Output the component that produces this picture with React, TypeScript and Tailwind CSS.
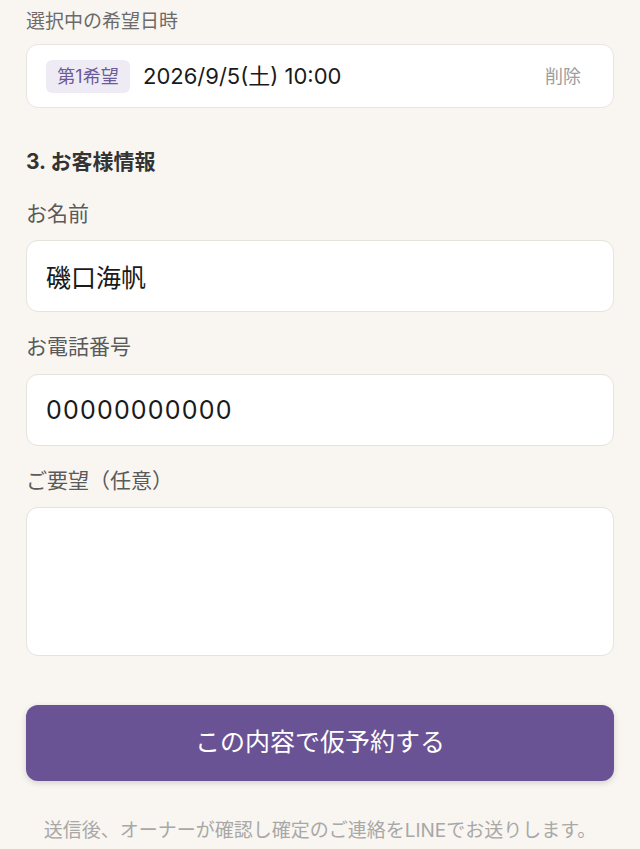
import { useState } from "react";

const font = { fontFamily: 'Inter, "Noto Sans CJK JP", sans-serif' };

function Label({ children }: { children: React.ReactNode }) {
    return <p className="text-[21px] leading-[26px] text-[#5a5a5a]">{children}</p>
}

export default function App() {
    const [name, setName] = useState("磯口海帆")
    const [tel, setTel] = useState("00000000000")
    const [note, setNote] = useState("")

    return (
        <div style={font} className="min-h-[849px] bg-[#f9f6f1] px-[26px] pt-[10px] pb-6">
            <p className="text-[19px] leading-[24px] text-[#6b6b6b]">選択中の希望日時</p>
            <div className="mt-[10px] h-[64px] flex items-center bg-white border border-[#e8e4de] rounded-[12px] pl-[19px] pr-[32px]">
                <span className="h-[33px] w-[84px] flex items-center justify-center rounded-[6px] bg-[#efebf5] text-[#6c5b98] text-[18px]">第1希望</span>
                <span className="ml-[13px] text-[22px] text-[#1a1a1a]">2026/9/5(土) 10:00</span>
                <button className="ml-auto text-[18px] text-[#9d9d9d]">削除</button>
            </div>

            <h2 className="mt-[40px] text-[21px] leading-[28px] font-bold text-[#333]">3. お客様情報</h2>

            <div className="mt-[25px]">
                <Label>お名前</Label>
                <input
                    value={name}
                    onChange={e => setName(e.target.value)}
                    className="mt-[13px] w-full h-[72px] bg-white border border-[#e6e2dc] rounded-[12px] px-[19px] text-[25px] text-[#1a1a1a] outline-none"
                />
            </div>

            <div className="mt-[22px]">
                <Label>お電話番号</Label>
                <input
                    value={tel}
                    onChange={e => setTel(e.target.value)}
                    className="mt-[14px] w-full h-[72px] bg-white border border-[#e6e2dc] rounded-[12px] px-[19px] text-[25px] tracking-[1.2px] text-[#1a1a1a] outline-none"
                />
            </div>

            <div className="mt-[22px]">
                <Label>ご要望（任意）</Label>
                <textarea
                    value={note}
                    onChange={e => setNote(e.target.value)}
                    className="block mt-[13px] w-full h-[149px] bg-white border border-[#e6e2dc] rounded-[12px] px-[19px] py-[14px] text-[20px] outline-none resize-none"
                />
            </div>

            <button className="mt-[49px] w-full h-[76px] rounded-[12px] bg-[#6a5394] text-white text-[25px] shadow-[0_2px_6px_rgba(0,0,0,0.15)]">
                この内容で仮予約する
            </button>

            <p className="mt-[38px] text-center text-[19px] leading-[24px] text-[#a8a8a8] whitespace-nowrap">送信後、オーナーが確認し確定のご連絡をLINEでお送りします。</p>
        </div>
    )
}
